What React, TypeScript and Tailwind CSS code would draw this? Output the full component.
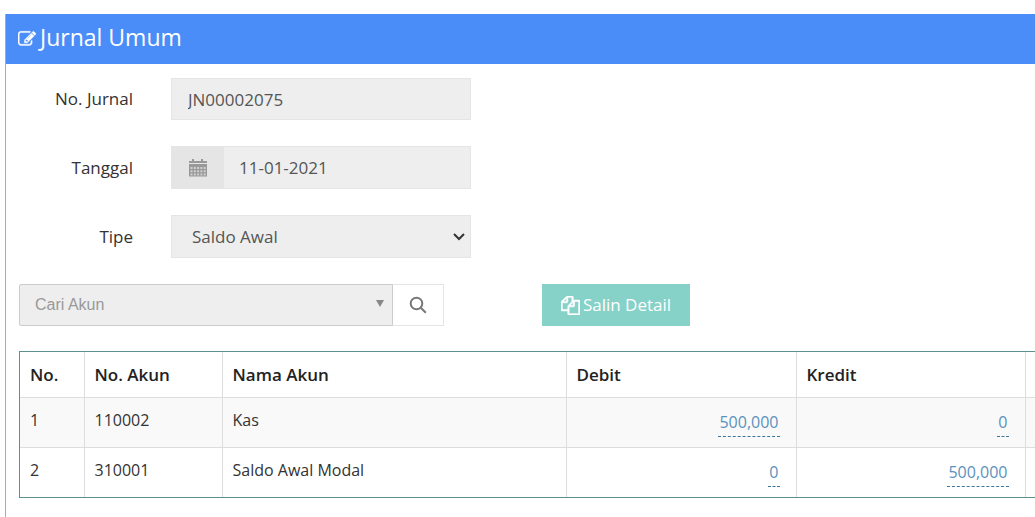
const rows = [
  { no: 1, code: "110002", name: "Kas", debit: "500,000", kredit: "0" },
  { no: 2, code: "310001", name: "Saldo Awal Modal", debit: "0", kredit: "500,000" },
];

function EditIcon() {
  return (
    <svg viewBox="0 0 1792 1792" className="size-[18px]" fill="currentColor" stroke="currentColor" strokeWidth="40" aria-hidden="true">
      <path d="M888 1184l116-116-152-152-116 116v56h96v96h56zm440-720q-16-16-33 1l-350 350q-17 17-1 33t33-1l350-350q17-17 1-33zm80 594v190q0 119-84.5 203.5t-203.5 84.5h-832q-119 0-203.5-84.5t-84.5-203.5v-832q0-119 84.5-203.5t203.5-84.5h832q63 0 117 25 15 7 18 23 3 17-9 29l-49 49q-14 14-32 8-23-6-45-6h-832q-66 0-113 47t-47 113v832q0 66 47 113t113 47h832q66 0 113-47t47-113v-126q0-13 9-22l64-64q15-15 35-7t20 29zm-96-738l288 288-672 672h-288v-288zm444 132l-92 92-288-288 92-92q28-28 68-28t68 28l152 152q28 28 28 68t-28 68z" />
    </svg>
  );
}

function CopyIcon() {
  return (
    <svg viewBox="0 0 1792 1792" className="size-[19px]" fill="currentColor" stroke="currentColor" strokeWidth="60" aria-hidden="true">
      <path d="M1696 384q40 0 68 28t28 68v1216q0 40-28 68t-68 28h-960q-40 0-68-28t-28-68v-288h-544q-40 0-68-28t-28-68v-672q0-40 20-88t48-76l408-408q28-28 76-48t88-20h416q40 0 68 28t28 68v328q68-40 128-40h416zm-544 213l-299 299h299v-299zm-640-384l-299 299h299v-299zm196 647l316-316v-416h-384v416q0 40-28 68t-68 28h-416v640h512v-256q0-40 20-88t48-76zm956 804v-1152h-384v416q0 40-28 68t-68 28h-416v640h896z" />
    </svg>
  );
}

function CalendarIcon() {
  return (
    <svg viewBox="0 0 18 18" className="size-[18px]" aria-hidden="true">
      <path d="M0 2h3V0h2v2h7V0h2v2h4v2H0z" fill="#999" />
      <path d="M0 5h18v12.500H0z" fill="#999" />
      <path
        d="M1.500 8h2v2h-2zm3.300 0h2v2h-2zm3.300 0h2v2h-2zm3.300 0h2v2h-2zm3.300 0h2v2h-2zM1.500 11.200h2v2h-2zm3.300 0h2v2h-2zm3.300 0h2v2h-2zm3.300 0h2v2h-2zm3.300 0h2v2h-2zM1.500 14.400h2v2h-2zm3.300 0h2v2h-2zm3.300 0h2v2h-2zm3.300 0h2v2h-2zm3.300 0h2v2h-2z"
        fill="#d0d0d0"
      />
    </svg>
  );
}

function SearchIcon() {
  return (
    <svg viewBox="0 0 18 18" className="size-[18px]" fill="none" stroke="#777" strokeWidth="2" aria-hidden="true">
      <circle cx="7.500" cy="7.500" r="5.800" />
      <path d="M11.800 11.800l5 5" />
    </svg>
  );
}

function Amount({ value }: { value: string }) {
  return (
    <a href="#" className="inline-block border-b border-dashed border-[#3d7699] px-px pb-[2px] leading-6 text-[#5b92bd]">
      {value}
    </a>
  );
}

export default function App() {
  return (
    <div className="overflow-hidden bg-white pt-[14px] pl-[5px] font-['Open_Sans','Noto_Sans',sans-serif] text-[#333]">
      <section className="border-l border-[#8fb0dc] pb-10">
        <header className="flex h-[50px] items-center gap-1 bg-[#4b8df8] pl-3 text-white">
          <EditIcon />
          <h1 className="pb-1 text-[23px] leading-8">Jurnal Umum</h1>
        </header>

        <div className="pt-[14px] pl-[13px]">
          <form className="flex flex-col gap-[26px] text-[17px]">
            <div className="flex items-center">
              <label htmlFor="nomor" className="w-[114px] text-right">
                No. Jurnal
              </label>
              <input
                id="nomor"
                readOnly
                defaultValue="JN00002075"
                className="ml-[38px] h-[42px] w-[300px] border border-[#e5e5e5] bg-[#eee] px-4 text-[#555] outline-none"
              />
            </div>

            <div className="flex items-center">
              <label htmlFor="tanggal" className="w-[114px] text-right">
                Tanggal
              </label>
              <div className="ml-[38px] flex h-[43px] w-[300px]">
                <span className="flex w-[53px] items-center justify-center bg-[#e5e5e5]">
                  <CalendarIcon />
                </span>
                <input
                  id="tanggal"
                  readOnly
                  defaultValue="11-01-2021"
                  className="min-w-0 flex-1 border border-l-0 border-[#e5e5e5] bg-[#eee] px-[15px] text-[#555] outline-none"
                />
              </div>
            </div>

            <div className="flex items-center">
              <label htmlFor="tipe" className="w-[114px] text-right">
                Tipe
              </label>
              <div className="relative ml-[38px] w-[300px]">
                <select
                  id="tipe"
                  className="h-[43px] w-full appearance-none border border-[#e5e5e5] bg-[#eee] px-5 text-[#555] outline-none"
                >
                  <option>Saldo Awal</option>
                </select>
                <svg
                  viewBox="0 0 12 8"
                  className="pointer-events-none absolute top-[18px] right-[6px] h-2 w-3"
                  fill="none"
                  stroke="#333"
                  strokeWidth="2"
                  aria-hidden="true"
                >
                  <path d="M1 1l5 5 5-5" />
                </svg>
              </div>
            </div>
          </form>

          {/* Account search and copy action */}
          <div className="mt-[26px] flex h-[42px]">
            <button
              type="button"
              className="flex w-[374px] items-center justify-between rounded-l-xs border border-[#ccc] bg-[#eee] pr-2 pl-[15px] font-['Liberation_Sans',Arial,sans-serif] text-[16px] text-[#999]"
            >
              Cari Akun
              <svg viewBox="0 0 8 7" className="mb-1 h-[7px] w-2" fill="#888" aria-hidden="true">
                <path d="M0 0h8L4 7z" />
              </svg>
            </button>
            <button
              type="button"
              aria-label="Cari"
              className="flex w-[51px] items-center justify-center border border-l-0 border-[#e5e5e5] bg-white"
            >
              <SearchIcon />
            </button>
            <button
              type="button"
              className="ml-[98px] flex w-[148px] items-center justify-center gap-[3px] bg-[#86d1c8] text-[17px] text-white"
            >
              <CopyIcon />
              Salin Detail
            </button>
          </div>

          <div className="mt-[25px] border border-r-0 border-[#5b9090]">
            <table className="w-full table-fixed border-collapse text-left text-[16px]">
              <colgroup>
                <col className="w-[64px]" />
                <col className="w-[138px]" />
                <col />
                <col className="w-[230px]" />
                <col className="w-[229px]" />
                <col className="w-[10px]" />
              </colgroup>
              <thead>
                <tr className="h-[45px] text-[17px] text-[#222]">
                  <th className="border-r border-[#ddd] px-[10px] font-semibold">No.</th>
                  <th className="border-r border-[#ddd] px-[10px] font-semibold">No. Akun</th>
                  <th className="border-r border-[#ddd] px-[10px] font-semibold">Nama Akun</th>
                  <th className="border-r border-[#ddd] px-[10px] font-semibold">Debit</th>
                  <th className="border-r border-[#ddd] px-[10px] font-semibold">Kredit</th>
                  <td />
                </tr>
              </thead>
              <tbody>
                {rows.map((row) => (
                  <tr key={row.no} className="h-[50px] border-t border-[#ddd] align-top odd:bg-[#f9f9f9]">
                    <td className="border-r border-[#ddd] px-[10px] pt-[10px]">{row.no}</td>
                    <td className="border-r border-[#ddd] px-[10px] pt-[10px]">{row.code}</td>
                    <td className="border-r border-[#ddd] px-[10px] pt-[10px]">{row.name}</td>
                    <td className="border-r border-[#ddd] px-[16px] pt-[12px] text-right">
                      <Amount value={row.debit} />
                    </td>
                    <td className="border-r border-[#ddd] px-[16px] pt-[12px] text-right">
                      <Amount value={row.kredit} />
                    </td>
                    <td />
                  </tr>
                ))}
              </tbody>
            </table>
          </div>
        </div>
      </section>
    </div>
  );
}
